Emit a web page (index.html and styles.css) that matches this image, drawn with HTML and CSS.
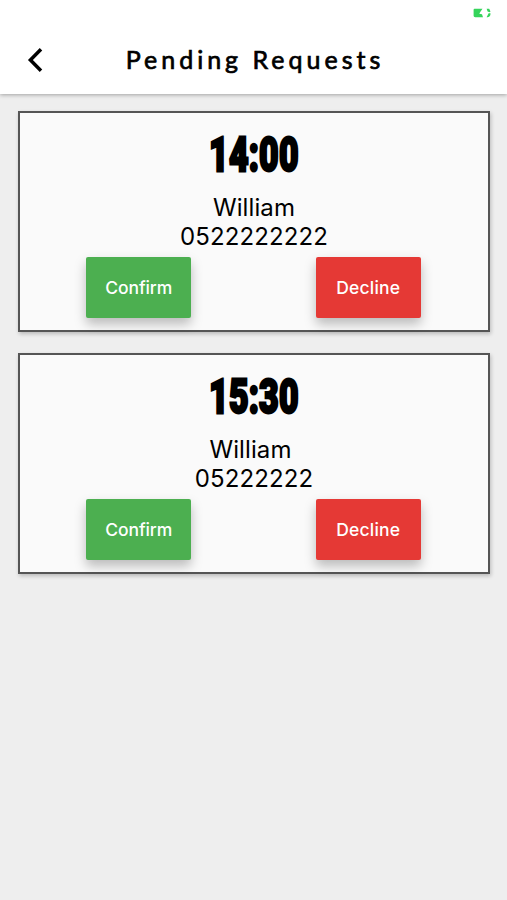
FILE: index.html
```
<!DOCTYPE html>
<html lang="en">
<head>
<meta charset="utf-8">
<title>Pending Requests</title>
<link rel="stylesheet" href="styles.css">
</head>
<body>
<header class="header">
  <div class="status">
    <svg width="20" height="12" viewBox="0 0 20 12" fill="#35d45b"><path d="M2.5 .7h8L8.1 4.3l-.8 1.5 2.7.4 1 3H3.2Q1.6 9.2 1.6 7.8V2Q1.6.7 2.5.7zM14.6 .7h2.6l1.3 2.7-1 .8L15.6 3.6zM16.6 5.2h1.9c0 2.9-.9 4-3.9 4z"/></svg>
  </div>
  <div class="bar">
    <button class="back" aria-label="Back">
      <svg width="18" height="26" viewBox="0 0 18 26" fill="none" stroke="#000" stroke-width="3.5"><path d="M15 2.2 4.4 13 15 23.8"/></svg>
    </button>
    <h1 class="title">Pending Requests</h1>
  </div>
</header>
<main class="list">
  <section class="card">
    <div class="time"><span class="digits">14:00</span></div>
    <div class="name">William</div>
    <div class="phone">0522222222</div>
    <div class="actions">
      <button class="btn confirm">Confirm</button>
      <button class="btn decline">Decline</button>
    </div>
  </section>
  <section class="card">
    <div class="time"><span class="digits">15:30</span></div>
    <div class="name trailing">William</div>
    <div class="phone">05222222</div>
    <div class="actions">
      <button class="btn confirm">Confirm</button>
      <button class="btn decline">Decline</button>
    </div>
  </section>
</main>
</body>
</html>
```
FILE: styles.css
```
* { box-sizing: border-box; }
body {
  margin: 0;
  min-height: 900px;
  background: #eee;
  color: #000;
  font-family: Inter, sans-serif;
}
button { border: 0; padding: 0; background: none; font-family: inherit; }
svg { display: block; }
.header {
  height: 94px;
  background: #fff;
  box-shadow: 0 1px 4px rgba(0, 0, 0, .32);
}
.status {
  display: flex;
  justify-content: flex-end;
  height: 26px;
  padding: 8px 15px 0 0;
}
.bar {
  display: grid;
  grid-template-columns: 63px 1fr 63px;
  align-items: center;
  height: 68px;
}
.back { padding-left: 26px; }
.title {
  margin: 0;
  padding: 0 0 2px 3px;
  text-align: center;
  white-space: nowrap;
  font: 400 25px/32px Lato, sans-serif;
  letter-spacing: 4px;
  -webkit-text-stroke: .7px #000;
}
.list {
  display: flex;
  flex-direction: column;
  gap: 21px;
  padding: 16.5px 17px 0 18px;
}
.card {
  height: 221px;
  border: 2px solid #555;
  background: #fafafa;
  text-align: center;
  box-shadow: 1px 2px 4px rgba(0, 0, 0, .22);
}
.time {
  height: 79px;
  padding-top: 14px;
}
.digits {
  display: inline-block;
  font: 900 49px/56px Roboto, sans-serif;
  letter-spacing: .3px;
  -webkit-text-stroke: 2.8px #000;
  transform: scaleX(.69);
}
.name, .phone {
  height: 29px;
  line-height: 29px;
  font-size: 24px;
}
.phone { padding-top: 1px; letter-spacing: .1px; }
.name { padding-top: 1px; letter-spacing: .1px; }
.trailing { padding-right: 7px; }
.actions {
  display: flex;
  justify-content: space-around;
  padding: 7px 5px 0 4px;
}
.btn {
  width: 105px;
  height: 61px;
  border-radius: 2px;
  color: #fff;
  font-size: 17.5px;
  font-weight: 500;
  box-shadow: 0 6px 12px rgba(0, 0, 0, .26);
}
.confirm { background: #4caf50; letter-spacing: -.1px; }
.decline { background: #e53935; letter-spacing: .2px; }
```
